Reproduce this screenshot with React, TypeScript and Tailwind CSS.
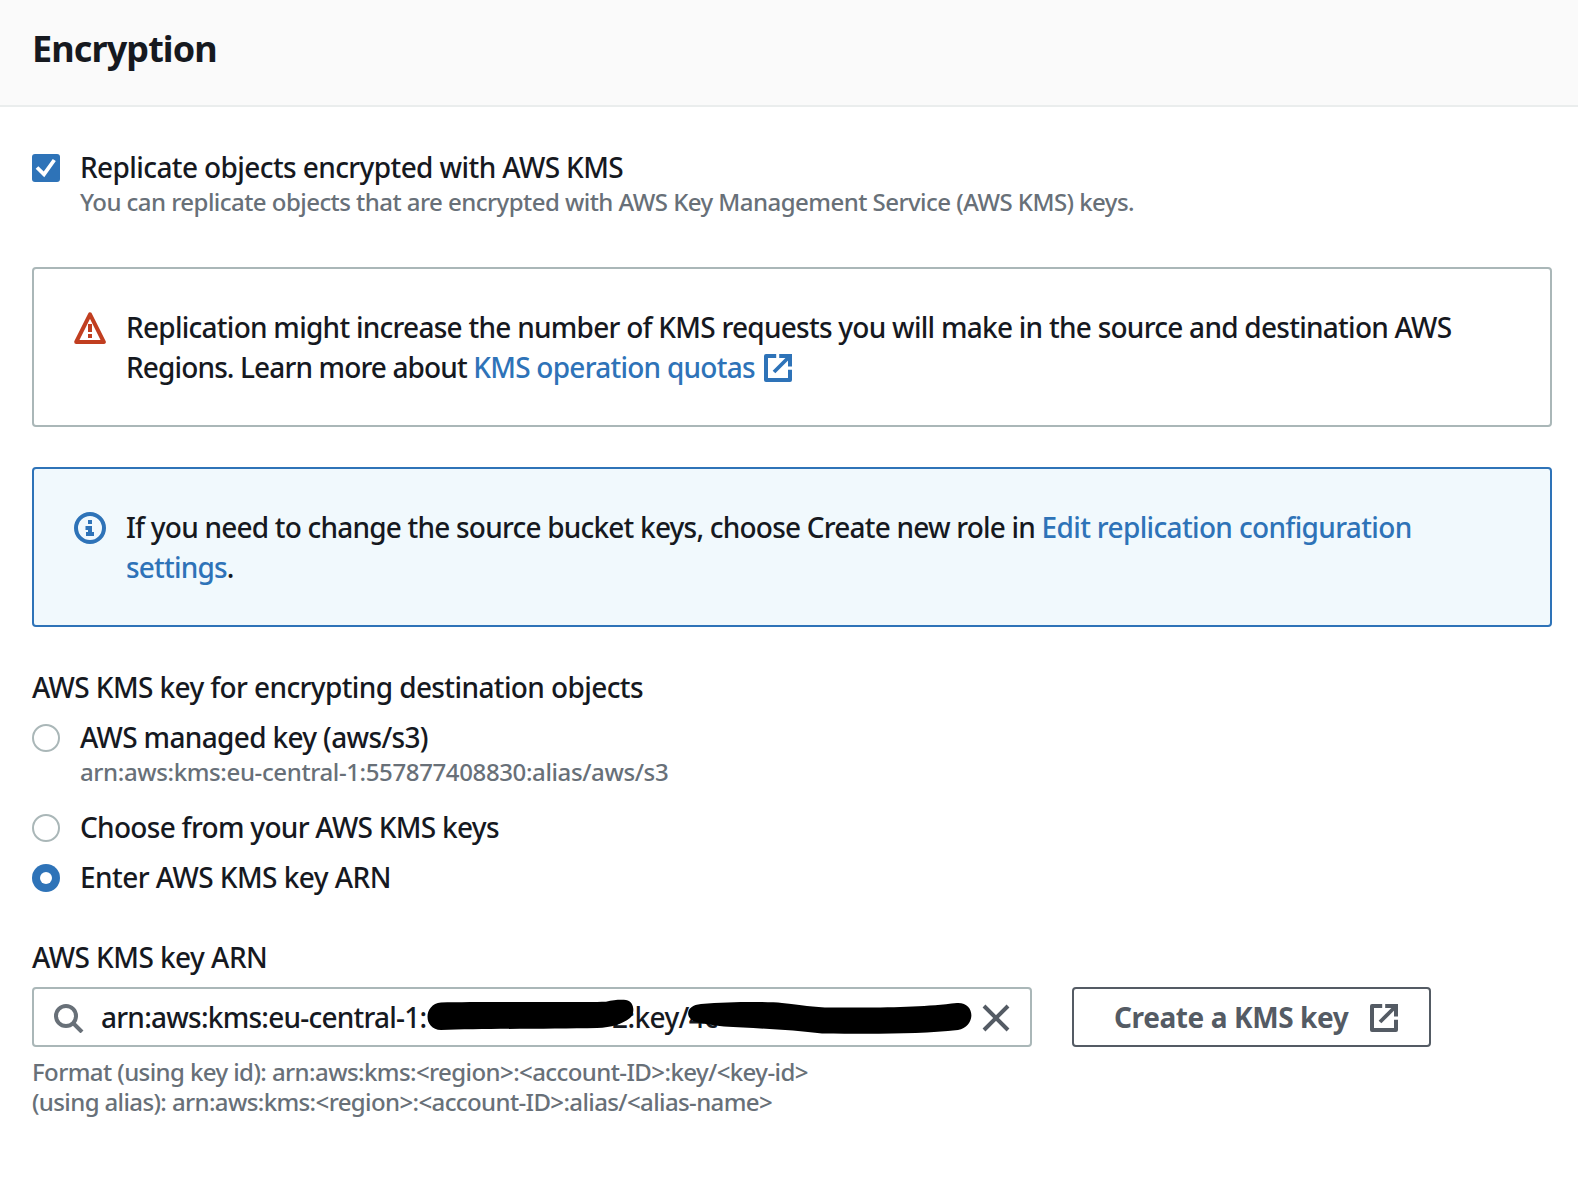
import React from "react";

function ExternalIcon({ className }: { className?: string }) {
  return (
    <svg viewBox="0 0 28 28" className={`h-7 w-7 shrink-0 ${className ?? ""}`} fill="none" stroke="currentColor" strokeWidth="4">
      <path d="M12.200 2H2v24h24V15.800" strokeLinejoin="round" />
      <path d="M15.200 2H26v10.400" />
      <path d="M25.500 2.500 10 18" strokeWidth="3.800" />
    </svg>
  );
}

function WarningIcon() {
  return (
    <svg viewBox="0 0 32 32" className="mt-[5px] h-8 w-8 shrink-0 text-[#c13e20]" fill="none" stroke="currentColor" strokeWidth="4">
      <path d="M16 2.400 29.800 30H2.200Z" strokeLinejoin="round" />
      <path d="M16 12V20M16 22v4" />
    </svg>
  );
}

function InfoIcon() {
  return (
    <svg viewBox="0 0 32 32" className="mt-[5px] h-8 w-8 shrink-0 text-[#2e73b8]">
      <circle cx="16" cy="16" r="14" fill="none" stroke="currentColor" strokeWidth="4" />
      <path d="M14 8h4v4h-4zM11.500 14H18v6h2v4h-8v-4h2v-2h-2.500z" fill="currentColor" />
    </svg>
  );
}

function Radio({ checked }: { checked?: boolean }) {
  return checked ? (
    <span className="mt-[7px] flex h-7 w-7 shrink-0 items-center justify-center rounded-full bg-[#2e73b8]">
      <span className="h-3 w-3 rounded-full bg-white" />
    </span>
  ) : (
    <span className="mt-[7px] h-7 w-7 shrink-0 rounded-full border-2 border-[#aab7b8] bg-white" />
  );
}

export default function App() {
  return (
    <div className="h-[1180px] w-[1578px] overflow-hidden whitespace-nowrap bg-white font-['Noto_Sans',sans-serif] text-[28px] font-[480] leading-10 text-[#16191f]">
      <header className="flex h-[107px] items-start border-b-2 border-[#eaeded] bg-[#fafafa] pl-8 pt-[27px]">
        <h1 className="text-[36px] font-bold leading-[44px] tracking-[-0.9px]">Encryption</h1>
      </header>

      <main className="pl-8 pr-[26px] pt-10">
        <div className="flex gap-5">
          <span className="mt-[7px] flex h-7 w-7 shrink-0 rounded-[3px] bg-[#2e73b8]">
            <svg viewBox="0 0 28 28" className="h-7 w-7" fill="none" stroke="white" strokeWidth="3.800">
              <path d="M5 13.500 12 20.300 22.300 6" />
            </svg>
          </span>
          <div>
            <div><span className="tracking-[-0.6px]">Replicate objects encrypted with AWS KMS</span></div>
            <div className="text-[24px] leading-[30px] text-[#687078]">
              <span className="tracking-[-0.545px]">You can replicate objects that are encrypted with AWS Key Management Service (AWS KMS) keys.</span>
            </div>
          </div>
        </div>

        <section className="mt-[50px] flex h-40 gap-5 rounded-[4px] border-2 border-[#aab7b8] pl-10 pt-[38px]">
          <WarningIcon />
          <div>
            <div className="tracking-[-0.74px]">
              Replication might increase the number of KMS requests you will make in the source and destination AWS
            </div>
            <div className="flex items-center">
              <span className="tracking-[-0.87px]">Regions. Learn more about&nbsp;</span>
              <a className="tracking-[-0.75px] text-[#2e73b8]">KMS operation quotas</a>
              <ExternalIcon className="ml-[9px] mt-px text-[#2e73b8]" />
            </div>
          </div>
        </section>

        <section className="mt-10 flex h-40 gap-5 rounded-[4px] border-2 border-[#2e73b8] bg-[#f1f9fd] pl-10 pt-[38px]">
          <InfoIcon />
          <div>
            <div className="flex">
              <span className="tracking-[-0.79px]">If you need to change the source bucket keys, choose Create new role in&nbsp;</span>
              <a className="tracking-[-0.65px] text-[#2e73b8]">Edit replication configuration</a>
            </div>
            <div className="tracking-[-0.8px]">
              <a className="text-[#2e73b8]">settings</a>.
            </div>
          </div>
        </section>

        <div className="mt-10"><span className="tracking-[-0.61px]">AWS KMS key for encrypting destination objects</span></div>
        <div className="mt-[10px] flex gap-5">
          <Radio />
          <div>
            <div><span className="tracking-[-0.66px]">AWS managed key (aws/s3)</span></div>
            <div className="text-[24px] leading-[30px] text-[#687078]">
              <span className="tracking-[-0.38px]">arn:aws:kms:eu-central-1:557877408830:alias/aws/s3</span>
            </div>
          </div>
        </div>
        <div className="mt-5 flex gap-5">
          <Radio />
          <span className="tracking-[-0.7px]">Choose from your AWS KMS keys</span>
        </div>
        <div className="mt-[10px] flex gap-5">
          <Radio checked />
          <span className="tracking-[-0.55px]">Enter AWS KMS key ARN</span>
        </div>

        <div className="mt-10"><span className="tracking-[-0.54px]">AWS KMS key ARN</span></div>
        <div className="mt-[10px] flex gap-10">
          <div className="relative flex h-[60px] w-[1000px] items-center rounded-[4px] border-2 border-[#aab7b8]">
            <svg viewBox="0 0 32 32" className="ml-[18px] h-8 w-8 shrink-0 text-[#687078]" fill="none" stroke="currentColor" strokeWidth="4">
              <circle cx="14" cy="15" r="10" />
              <path d="M21 22l9 9" />
            </svg>
            <div className="ml-[17px] w-[511px] shrink-0">
              <span className="tracking-[-0.76px]">arn:aws:kms:eu-central-1:</span>
            </div>
            <span className="tracking-[-0.6px]">2:key/4c</span>
            <svg viewBox="0 0 1000 60" className="absolute -left-0.5 -top-0.5 h-[60px] w-[1000px]" fill="black">
              <path d="M409 15.500 C450 14.500 540 15.500 574 14.800 C582 12.500 590 12.500 594 13 C603 14.500 603 27 598 31 C590 37 580 40.500 565 41 C520 42 450 41.500 409 43 C391 43 391 17 409 15.500Z" />
              <path d="M669 17 C700 14.500 735 14.500 750 16 C770 18 780 20.500 800 20.500 C860 21 890 20 925 16 C944 15 944 40 926 43 C890 47 850 47 790 46.500 C760 43 720 41 692 39.500 C680 38 670 37 661 34 C652 28 656 18 669 17Z" />
            </svg>
            <svg viewBox="0 0 28 28" className="absolute right-[20px] top-[15px] h-7 w-7 text-[#545b64]" fill="none" stroke="currentColor" strokeWidth="4">
              <path d="M2 2l24 24M26 2 2 26" />
            </svg>
          </div>
          <button className="flex h-[60px] w-[359px] items-center justify-between rounded-[4px] border-2 border-[#545b64] pl-10 pr-[31px] font-bold text-[#545b64]">
            <span className="tracking-[-0.4px]">Create a KMS key</span>
            <ExternalIcon className="mt-[2px]" />
          </button>
        </div>
        <div className="mt-[10px] text-[24px] leading-[30px] text-[#687078]">
          <div><span className="tracking-[-0.59px]">Format (using key id): arn:aws:kms:&lt;region&gt;:&lt;account-ID&gt;:key/&lt;key-id&gt;</span></div>
          <div><span className="tracking-[-0.62px]">(using alias): arn:aws:kms:&lt;region&gt;:&lt;account-ID&gt;:alias/&lt;alias-name&gt;</span></div>
        </div>
      </main>
    </div>
  );
}
